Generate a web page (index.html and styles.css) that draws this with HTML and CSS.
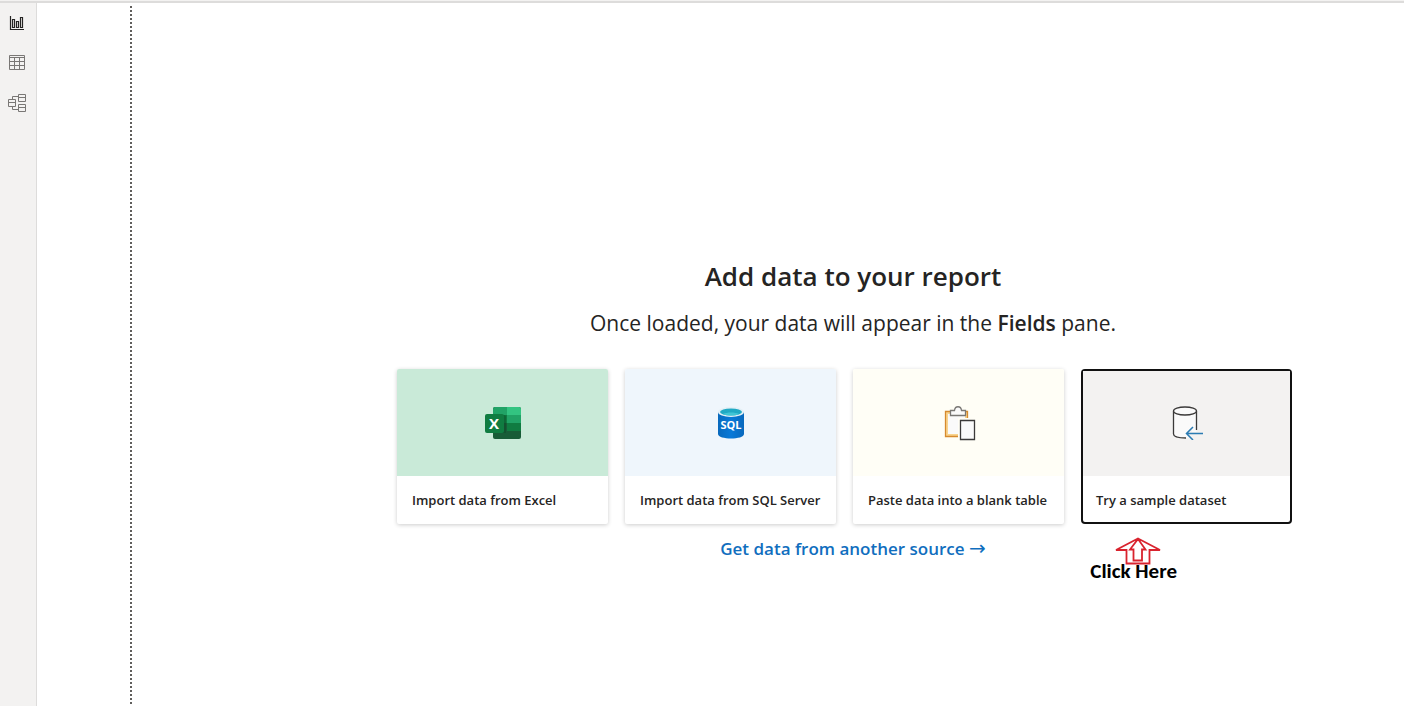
FILE: index.html
```html
<!DOCTYPE html>
<html lang="en">
<head>
<meta charset="utf-8">
<title>Report</title>
<link rel="stylesheet" href="styles.css">
</head>
<body>
<div class="app">
  <nav class="rail" aria-label="Views">
    <button class="rail-button active" aria-label="Report view">
      <svg width="18" height="18" viewBox="0 0 18 18" fill="none" stroke="currentColor"><path d="M2.500 2v13.500H16M4.500 5.500h2v8h-2zM8.500 7.500h2v6h-2zM12.500 3.500h2v10h-2z" stroke-width="1.200"/></svg>
    </button>
    <button class="rail-button" aria-label="Data view">
      <svg width="18" height="18" viewBox="0 0 18 18" fill="none" stroke="currentColor"><path d="M1.500 1.500h15v14h-15zM1.500 3.500h15M1.500 7.500h15M1.500 11.500h15M6.500 3.500v12M11.500 3.500v12"/></svg>
    </button>
    <button class="rail-button" aria-label="Model view">
      <svg width="18" height="18" viewBox="0 0 18 18" fill="none" stroke="currentColor"><path d="M.5 5.500h7v7h-7zM.5 8.500h7M10.500.5h7v7h-7zM10.500 3.500h7M10.500 10.500h7v7h-7zM10.500 13.500h7M4.500 5.500v-3h6M4.500 12.500v3h6"/></svg>
    </button>
  </nav>
  <main class="canvas">
    <section class="start">
      <h1 class="title">Add data to your report</h1>
      <p class="subtitle">Once loaded, your data will appear in the <strong>Fields</strong> pane.</p>
      <div class="cards">
        <button class="card">
          <span class="art excel">
            <svg width="38" height="34" viewBox="0 0 38 34">
              <rect x="9" y="1" width="28" height="32" rx="2" fill="#185c37"/>
              <path d="M11 1h12v8H9V3a2 2 0 0 1 2-2z" fill="#21a366"/>
              <path d="M23 1h12a2 2 0 0 1 2 2v6H23z" fill="#33c481"/>
              <path d="M9 9h14v8H9z" fill="#107c41"/><path d="M23 9h14v8H23z" fill="#21a366"/>
              <path d="M23 17h14v8H23z" fill="#107c41"/>
              <path d="M9 9h11a2 2 0 0 1 2 2v16H9z" fill="#0b4024" opacity=".35"/>
              <rect x="1" y="8" width="19" height="19" rx="2" fill="#107c41"/>
              <text class="excel-letter" x="10" y="23" text-anchor="middle">X</text>
            </svg>
          </span>
          <span class="label">Import data from Excel</span>
        </button>
        <button class="card">
          <span class="art sql">
            <svg width="28" height="34" viewBox="0 0 28 34">
              <defs><linearGradient id="sqlBody"><stop offset="0" stop-color="#0869bd"/><stop offset=".5" stop-color="#0879d8"/><stop offset="1" stop-color="#0869bd"/></linearGradient></defs>
              <path d="M1 6v22c0 6 26 6 26 0V6z" fill="url(#sqlBody)"/>
              <ellipse cx="14" cy="6" rx="13" ry="5" fill="#e3f0f6"/>
              <ellipse cx="14" cy="6" rx="11" ry="3.500" fill="#20a9c4"/>
              <path d="M6 8c4-2 12-2 16 0-4 2-12 2-16 0z" fill="#40c5d5"/>
              <text class="sql-letters" x="14" y="23" text-anchor="middle">SQL</text>
            </svg>
          </span>
          <span class="label">Import data from SQL Server</span>
        </button>
        <button class="card">
          <span class="art paste">
            <svg width="34" height="36" viewBox="-1 0 34 36" fill="none">
              <path d="M2.500 6.500h22v25h-22z" fill="#f9d48f" stroke="#d68a2e" stroke-width="1.300"/>
              <path d="M5 9h17v20H5z" fill="#fafafa"/>
              <path d="M7.500 10.500v-5h4c.5-5 6.500-5 7 0h4v5z" fill="#fafafa" stroke="#797774" stroke-width="1.300"/>
              <path d="M15 13h19v23H15z" fill="#fffef6"/>
              <path d="M17.500 15.500h14v19h-14z" fill="#fafafa" stroke="#3b3a39" stroke-width="1.300"/>
            </svg>
          </span>
          <span class="label">Paste data into a blank table</span>
        </button>
        <button class="card selected">
          <span class="art sample">
            <svg width="34" height="34" viewBox="-2 0 34 34" fill="none">
              <path d="M1.500 5v23c0 5 23 5 23 0V5z" fill="#fafafa"/>
              <path d="M14 32C7 32 1.500 31 1.500 28V5M24.500 5v19" stroke="#3b3a39" stroke-width="1.300"/>
              <ellipse cx="13" cy="5" rx="11.500" ry="4" fill="#fafafa" stroke="#3b3a39" stroke-width="1.300"/>
              <path d="M14 27l6-6v5h12v8H18z" fill="#f3f2f1"/>
              <path d="M31 27.500H14.500M21 21l-6.500 6.500L21 34" stroke="#2b7cb3" stroke-width="1.500"/>
            </svg>
          </span>
          <span class="label">Try a sample dataset</span>
        </button>
        <div class="callout">
          <svg class="callout-arrow" width="48" height="28" viewBox="0 0 48 28" fill="none" stroke="#d9232e" stroke-width="1.800">
            <path d="M24 1.500L46 13H35.500v13.500h-23V13H2zM24 2l7.500 10.500H28V23.500h-8.500V12.500H16z"/>
          </svg>
          <span class="callout-text">Click Here</span>
        </div>
      </div>
      <a class="more" href="#">Get data from another source <span class="more-arrow">→</span></a>
    </section>
  </main>
</div>
</body>
</html>
```
FILE: styles.css
```css
* { box-sizing: border-box; }
body {
  margin: 0;
  background: #fff;
  color: #252423;
  font-family: "Segoe UI", "Open Sans", "Noto Sans", sans-serif;
}
button { font: inherit; color: inherit; cursor: pointer; }
.app {
  display: flex;
  min-height: 100vh;
  border-top: 1px solid #f3f2f1;
  box-shadow: inset 0 2px #dddcdb;
  padding-top: 2px;
}
.rail {
  display: flex;
  flex-direction: column;
  width: 37px;
  background: #f3f2f1;
  border-right: 1px solid #dddcdb;
}
.rail-button {
  display: flex;
  align-items: center;
  justify-content: center;
  height: 40px;
  padding: 0 2px 0 0;
  border: 0;
  background: none;
  color: #797775;
}
.rail-button.active { color: #252423; }
.canvas {
  flex: 1;
  display: flex;
  justify-content: center;
  margin: 3px 0 0 93px;
  padding: 252px 0 0 172px;
  background: repeating-linear-gradient(#605e5c 0 2px, transparent 2px 4px) left top / 2px 100% no-repeat;
}
.start { display: flex; flex-direction: column; align-items: center; }
.title { margin: 0; font-size: 26px; line-height: 36px; font-weight: 600; }
.subtitle { margin: 13px 0 0; font-size: 21px; line-height: 32px; }
.subtitle strong { font-weight: 600; }
.cards {
  position: relative;
  display: grid;
  grid-template-columns: repeat(4, 211px);
  column-gap: 17px;
  margin: 30px 17px 0 0;
}
.card {
  display: flex;
  flex-direction: column;
  padding: 0;
  border: 0;
  border-radius: 2px;
  overflow: hidden;
  background: #fff;
  box-shadow: 0 1px 4px rgba(0, 0, 0, .2);
  text-align: left;
}
.card.selected { border-radius: 4px; box-shadow: inset 0 0 0 2px #111; }
.art {
  display: flex;
  align-items: center;
  justify-content: center;
  align-self: stretch;
  height: 107px;
}
.selected .art { margin: 2px 2px 0; height: 105px; padding-bottom: 2px; }
.excel { background: #c9ead8; }
.sql { background: #eff6fc; }
.paste { background: #fffef6; }
.sample { background: #f3f2f1; }
.label { padding: 0 15px; font-size: 13px; line-height: 48px; font-weight: 600; white-space: nowrap; }
.excel-letter { fill: #fff; font: 700 15px "Open Sans", sans-serif; }
.sql-letters { fill: #fff; font: 700 11px "Open Sans", sans-serif; }
.more {
  margin-top: 11px;
  color: #106ebe;
  font-size: 17px;
  line-height: 28px;
  font-weight: 600;
  text-decoration: none;
}
.more-arrow { font-family: "DejaVu Sans", sans-serif; font-size: 20px; line-height: 20px; font-weight: 400; }
.callout {
  position: absolute;
  top: 168px;
  right: 115px;
}
.callout-arrow { position: absolute; left: 24px; top: 0; }
.callout-text {
  position: relative;
  display: block;
  padding-top: 22px;
  color: #000;
  font: 700 21px/24px Carlito, Lato, sans-serif;
  white-space: nowrap;
}
```
